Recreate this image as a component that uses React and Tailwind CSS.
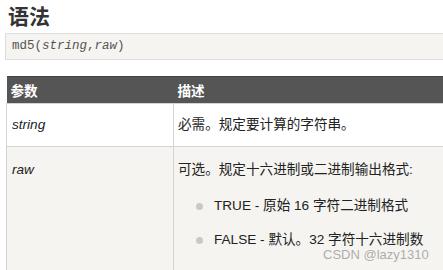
const cjk = '"Noto Sans CJK SC", "Liberation Sans", sans-serif';
const body = '"Liberation Sans", "Noto Sans CJK SC", sans-serif';
const mono = '"Liberation Mono", "DejaVu Sans Mono", monospace';

export default function App() {
  return (
    <div className="relative h-[270px] w-[443px] overflow-hidden bg-white text-[#222]" style={{ fontFamily: body }}>
      <h2 className="ml-[8px] pt-[2px] text-[21px] font-bold leading-[26px] text-[#333]" style={{ fontFamily: cjk }}>
        语法
      </h2>

      <div className="ml-[5px] mt-[5px] w-[460px] border border-[#ddd] bg-[#f5f4f0] py-[4px] pl-[6px] text-[12.5px] leading-[17px] text-[#555]" style={{ fontFamily: mono }}>
        md5(<i>string</i>,<i>raw</i>)
      </div>

      <table className="ml-[6px] mt-[16px] w-[470px] border-collapse text-[13.6px]">
        <thead>
          <tr className="bg-[#555] text-white">
            <th className="h-[27px] w-[167px] border-t border-[#444] px-[4px] text-left font-bold" style={{ fontFamily: cjk }}>参数</th>
            <th className="border-t border-[#444] px-[4px] text-left font-bold" style={{ fontFamily: cjk }}>描述</th>
          </tr>
        </thead>
        <tbody>
          <tr className="bg-white">
            <td className="h-[43px] border border-[#d4d4d4] px-[5px] italic">string</td>
            <td className="border border-[#d4d4d4] px-[4px]">必需。规定要计算的字符串。</td>
          </tr>
          <tr className="bg-[#f5f4f0]">
            <td className="border border-[#d4d4d4] px-[5px] pt-[13px] align-top italic">raw</td>
            <td className="border border-[#d4d4d4] px-[4px] pt-[13px] align-top">
              <p className="leading-[20px]">可选。规定十六进制或二进制输出格式:</p>
              <ul className="mt-[16px] space-y-[14px] pl-[18px] pb-[20px]">
                <li className="flex items-center gap-[11px] leading-[20px]">
                  <span className="h-[7px] w-[7px] rounded-full bg-[#c8c8c8]" />
                  TRUE - 原始 16 字符二进制格式
                </li>
                <li className="flex items-center gap-[11px] leading-[20px]">
                  <span className="h-[7px] w-[7px] rounded-full bg-[#c8c8c8]" />
                  FALSE - 默认。32 字符十六进制数
                </li>
              </ul>
            </td>
          </tr>
        </tbody>
      </table>

      <div className="absolute left-[323px] top-[245px] text-[13px] text-[#999]/80" style={{ fontFamily: body }}>
        CSDN @lazy1310
      </div>
    </div>
  );
}
